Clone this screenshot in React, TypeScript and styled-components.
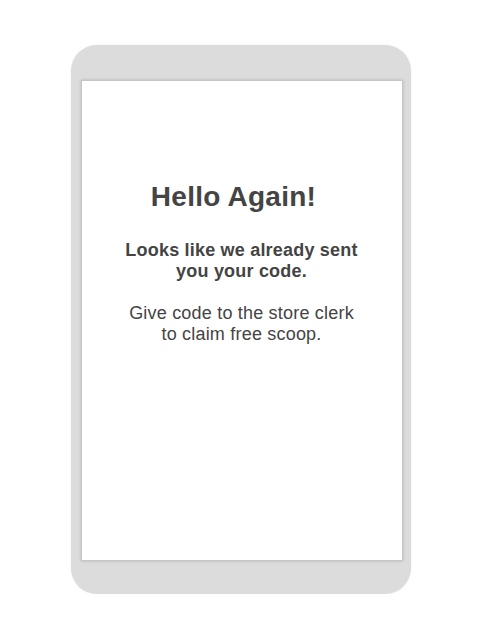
import React from "react";
import styled, { createGlobalStyle } from "styled-components";

const Global = createGlobalStyle`
  html, body { margin: 0; padding: 0; background: #ffffff; }
  body { font-family: "Liberation Sans", Arial, sans-serif; }
`;

const Page = styled.div`
  display: flex;
  justify-content: center;
  padding-top: 45px;
`;

const Device = styled.div`
  width: 340px;
  height: 549px;
  box-sizing: border-box;
  background: #dcdcdc;
  border-radius: 26px;
  padding: 35px 8px 0 10px;
  box-shadow: 0 0 2px rgba(0, 0, 0, 0.08);
`;

const Screen = styled.div`
  width: 322px;
  height: 481px;
  box-sizing: border-box;
  background: #ffffff;
  border: 1px solid #c6c6c6;
  box-shadow: 0 0 3px rgba(0, 0, 0, 0.18);
  display: flex;
  flex-direction: column;
  align-items: center;
  padding-top: 100px;
  color: #444444;
  text-align: center;
`;

const Title = styled.h1`
  margin: 0;
  padding-right: 16px;
  font-size: 28px;
  line-height: 32px;
  font-weight: 700;
  letter-spacing: 0.25px;
`;

const Para = styled.p<{ $bold?: boolean; $gap: number }>`
  margin: ${(p) => p.$gap}px 0 0;
  font-size: 18px;
  line-height: 21px;
  font-weight: ${(p) => (p.$bold ? 700 : 400)};
  letter-spacing: 0.2px;
`;

export default function App() {
  return (
    <>
      <Global />
      <Page>
        <Device>
          <Screen>
            <Title>Hello Again!</Title>
            <Para $bold $gap={27}>
              Looks like we already sent
              <br />
              you your code.
            </Para>
            <Para $gap={21}>
              Give code to the store clerk
              <br />
              to claim free scoop.
            </Para>
          </Screen>
        </Device>
      </Page>
    </>
  );
}
